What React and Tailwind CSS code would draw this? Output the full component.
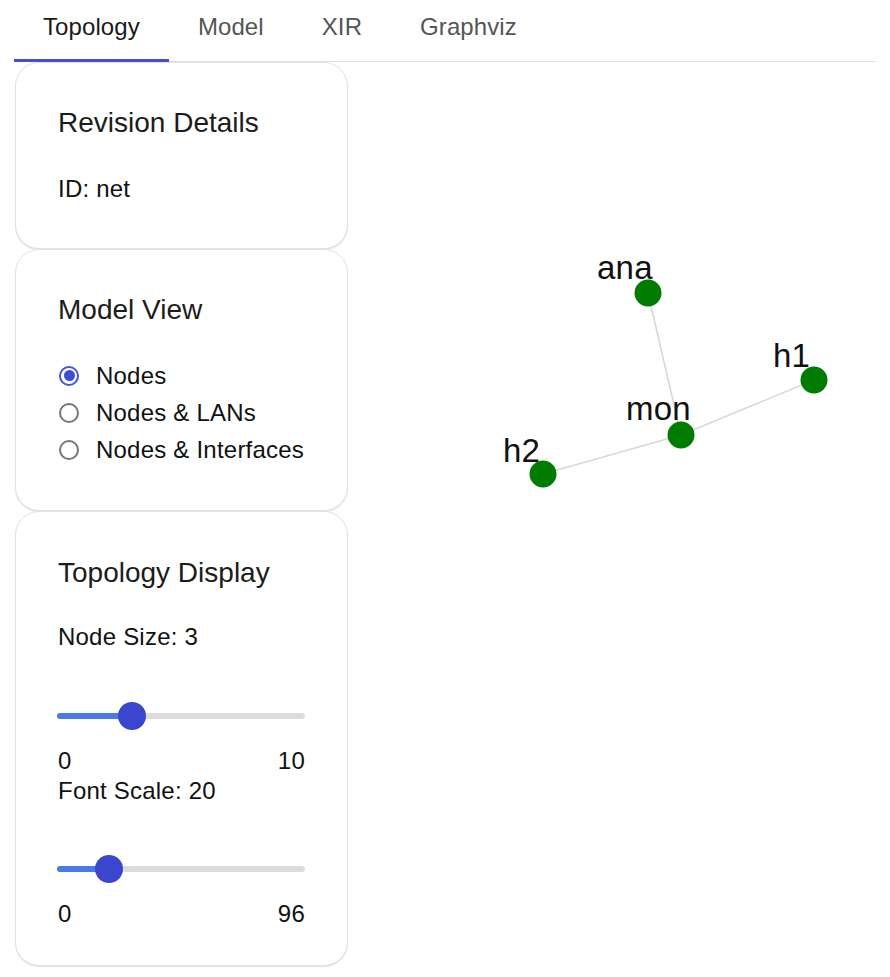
import React, { useState } from "react";

const tabs = ["Topology", "Model", "XIR", "Graphviz"];

const nodes = [
  { id: "ana", cx: 300, cy: 231, lx: 249, ly: 217 },
  { id: "h1", cx: 466, cy: 318, lx: 425, ly: 305 },
  { id: "mon", cx: 333, cy: 373, lx: 278, ly: 358 },
  { id: "h2", cx: 195, cy: 412, lx: 155, ly: 400 },
];

const links = [
  ["ana", "mon"],
  ["mon", "h1"],
  ["mon", "h2"],
];

function Card({ children, className = "" }) {
  return (
    <div
      className={
        "rounded-[24px] border border-[#e2e2e2] bg-white px-[42px] shadow-[0_1px_1px_rgba(0,0,0,0.12)] " +
        className
      }
    >
      {children}
    </div>
  );
}

function Radio({ label, checked, onClick }) {
  return (
    <label className="flex h-[37px] cursor-pointer items-center" onClick={onClick}>
      <span
        className={
          "ml-px flex h-[20px] w-[20px] items-center justify-center rounded-full border-2 " +
          (checked ? "border-[#4353dc]" : "border-[#767676]")
        }
      >
        {checked && <span className="h-[11px] w-[11px] rounded-full bg-[#3d4dd6]" />}
      </span>
      <span className="ml-[17px]">{label}</span>
    </label>
  );
}

function Slider({ value, max }) {
  const pct = (value / max) * 100;
  return (
    <div className="relative h-[28px]">
      <div className="absolute left-[-1px] right-0 top-[11px] h-[6px] rounded-full bg-[#dcdcdc]" />
      <div
        className="absolute left-[-1px] top-[11px] h-[6px] rounded-full bg-[#4b79e8]"
        style={{ width: pct + "%" }}
      />
      <div
        className="absolute top-0 h-[28px] w-[28px] -translate-x-1/2 rounded-full bg-[#3b46cf]"
        style={{ left: pct + "%" }}
      />
    </div>
  );
}

function Topology() {
  const byId = Object.fromEntries(nodes.map((n) => [n.id, n]));
  return (
    <svg width="528" height="600" className="block">
      {links.map(([a, b]) => (
        <line
          key={a + b}
          x1={byId[a].cx}
          y1={byId[a].cy}
          x2={byId[b].cx}
          y2={byId[b].cy}
          stroke="#d8d8d8"
          strokeWidth="1.6"
        />
      ))}
      {nodes.map((n) => (
        <text
          key={n.id + "t"}
          x={n.lx}
          y={n.ly}
          fontSize="33"
          fill="#111"
          fontFamily="'Liberation Sans', Arial, sans-serif"
        >
          {n.id}
        </text>
      ))}
      {nodes.map((n) => (
        <circle key={n.id} cx={n.cx} cy={n.cy} r="13.5" fill="#007d00" />
      ))}
    </svg>
  );
}

export default function App() {
  const [tab, setTab] = useState(0);
  const [view, setView] = useState(0);

  return (
    <div className="min-h-screen bg-white font-['Liberation_Sans',Arial,sans-serif] text-[24px] tracking-[0.22px] text-[#111]">
      <div className="mx-[14px] flex border-b border-[#e0e0e0]">
        {tabs.map((t, i) => (
          <button
            key={t}
            onClick={() => setTab(i)}
            className={
              "relative flex h-[61px] items-center px-[29px] pb-[7px] tracking-[0.1px] " +
              (i === tab ? "text-[#1a1a1a]" : "text-[#555]")
            }
          >
            {t}
            {i === tab && <span className="absolute bottom-[-1px] left-0 right-0 h-[3px] bg-[#3f4fd8]" />}
          </button>
        ))}
      </div>

      <div className="flex">
        <div className="ml-[15px] flex w-[333px] flex-col">
          <Card className="pt-[43px] pb-[45px]">
            <div className="text-[28px] leading-[34px] tracking-normal text-[#1c1c1c]">Revision Details</div>
            <div className="mt-[35px] leading-[28px]">ID: net</div>
          </Card>

          <Card className="pt-[43px] pb-[42px]">
            <div className="text-[28px] leading-[34px] tracking-normal text-[#1c1c1c]">Model View</div>
            <div className="mt-[30px] flex flex-col">
              {["Nodes", "Nodes & LANs", "Nodes & Interfaces"].map((l, i) => (
                <Radio key={l} label={l} checked={view === i} onClick={() => setView(i)} />
              ))}
            </div>
          </Card>

          <Card className="pt-[44px] pb-[37px] leading-[28px]">
            <div className="text-[28px] leading-[34px] tracking-normal text-[#1c1c1c]">Topology Display</div>
            <div className="mt-[33px]">Node Size: 3</div>
            <div className="mt-[51px]">
              <Slider value={3} max={10} />
            </div>
            <div className="mt-[17px] flex justify-between">
              <span>0</span>
              <span>10</span>
            </div>
            <div className="mt-[2px]">Font Scale: 20</div>
            <div className="mt-[50px]">
              <Slider value={20} max={96} />
            </div>
            <div className="mt-[17px] flex justify-between">
              <span>0</span>
              <span>96</span>
            </div>
          </Card>
        </div>

        <div className="flex-1">
          <Topology />
        </div>
      </div>
    </div>
  );
}
